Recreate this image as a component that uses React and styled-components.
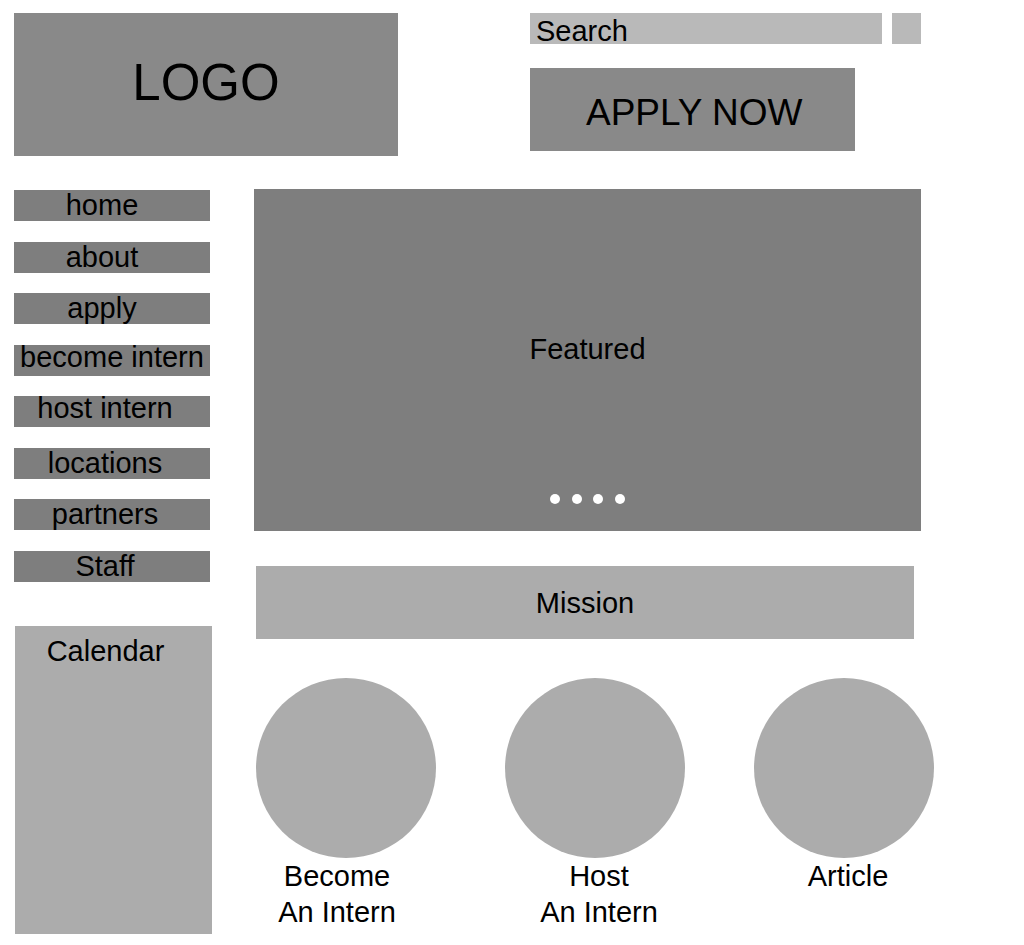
import React from "react";
import styled, { createGlobalStyle } from "styled-components";

const GlobalStyle = createGlobalStyle`
  *, *::before, *::after { box-sizing: border-box; }
  body {
    margin: 0;
    background: #ffffff;
    color: #000000;
    font-family: "Liberation Sans", Arial, Helvetica, sans-serif;
    font-size: 29px;
    line-height: 36px;
  }
  button, input { font: inherit; color: inherit; border: 0; border-radius: 0; margin: 0; padding: 0; }
  button { cursor: pointer; }
  a { color: inherit; text-decoration: none; }
  h1, h2, p { margin: 0; font-size: inherit; font-weight: normal; }
`;

const Page = styled.div`
  padding: 13px 90px 11px 14px;
`;

const Header = styled.header`
  display: grid;
  grid-template-columns: minmax(0, 384fr) minmax(0, 391fr);
  column-gap: 132px;
  margin-right: 13px;
`;

const Logo = styled.h1`
  display: flex;
  align-items: center;
  justify-content: center;
  height: 143px;
  padding-bottom: 3px;
  background: #898989;
  font-size: 51px;
`;

const Tools = styled.div`
  display: flex;
  flex-direction: column;
  gap: 24px;
`;

const SearchForm = styled.form`
  display: flex;
  gap: 10px;
  height: 31px;
`;

const SearchInput = styled.input`
  flex: 1;
  min-width: 0;
  padding: 6px 0 0 6px;
  background: #b9b9b9;
  line-height: 25px;
  outline: none;
  &::placeholder { color: #000000; opacity: 1; }
`;

const SearchButton = styled.button`
  width: 29px;
  background: #b9b9b9;
`;

const ApplyButton = styled.button`
  width: 83%;
  height: 83px;
  padding: 7px 0 0 4px;
  background: #898989;
  font-size: 37px;
`;

const Body = styled.div`
  display: grid;
  grid-template-columns: 198px minmax(0, 1fr);
  column-gap: 42px;
  margin-top: 33px;
`;

const Sidebar = styled.aside`
  display: flex;
  flex-direction: column;
  gap: 44px;
  padding-top: 1px;
`;

const Nav = styled.nav`
  display: flex;
  flex-direction: column;
  justify-content: space-between;
  min-height: 392px;
  margin-right: 2px;
`;

const NavLink = styled.a`
  display: flex;
  justify-content: center;
  height: 31px;
  padding-right: ${({ $inset }) => $inset}px;
  background: #7e7e7e;
  line-height: ${({ $raised }) => ($raised ? 25 : 31)}px;
  white-space: nowrap;
`;

const Calendar = styled.section`
  flex: 1;
  min-height: 308px;
  margin-left: 1px;
  padding: 7px 16px 0 0;
  background: #acacac;
  text-align: center;
`;

const Content = styled.main`
  min-width: 0;
`;

const Featured = styled.section`
  display: flex;
  flex-direction: column;
  align-items: center;
  justify-content: space-between;
  height: 342px;
  margin-right: 13px;
  padding: 142px 0 27px;
  background: #7e7e7e;
`;

const Dots = styled.div`
  display: flex;
  justify-content: space-between;
  width: 75px;
`;

const Dot = styled.button`
  width: 10px;
  height: 10px;
  border-radius: 50%;
  background: #ffffff;
`;

const Mission = styled.section`
  display: flex;
  align-items: center;
  justify-content: center;
  height: 73px;
  margin: 35px 20px 39px 2px;
  background: #acacac;
`;

const Cards = styled.div`
  display: flex;
  justify-content: space-between;
  margin-left: 2px;
`;

const Card = styled.a`
  display: block;
  width: 180px;
  text-align: center;
`;

const Circle = styled.div`
  height: 180px;
  border-radius: 50%;
  background: #acacac;
`;

const Caption = styled.p`
  padding: ${({ $side }) => ($side === "left" ? "0 18px 0 0" : "0 0 0 8px")};
  white-space: pre-line;
`;

const links = [
  { label: "home", inset: 20 },
  { label: "about", inset: 20 },
  { label: "apply", inset: 20 },
  { label: "become intern", inset: 0, raised: true },
  { label: "host intern", inset: 14, raised: true },
  { label: "locations", inset: 14 },
  { label: "partners", inset: 14 },
  { label: "Staff", inset: 14 },
];

const cards = [
  { caption: "Become\nAn Intern", side: "left" },
  { caption: "Host\nAn Intern", side: "right" },
  { caption: "Article", side: "right" },
];

export default function App() {
  return (
    <>
      <GlobalStyle />
      <Page>
        <Header>
          <Logo>LOGO</Logo>
          <Tools>
            <SearchForm role="search" onSubmit={(e) => e.preventDefault()}>
              <SearchInput type="text" aria-label="Search" placeholder="Search" />
              <SearchButton type="submit" aria-label="Submit search" />
            </SearchForm>
            <ApplyButton type="button">APPLY NOW</ApplyButton>
          </Tools>
        </Header>
        <Body>
          <Sidebar>
            <Nav>
              {links.map(({ label, inset, raised }) => (
                <NavLink key={label} href="#" $inset={inset} $raised={raised}>
                  {label}
                </NavLink>
              ))}
            </Nav>
            <Calendar>
              <h2>Calendar</h2>
            </Calendar>
          </Sidebar>
          <Content>
            <Featured>
              <h2>Featured</h2>
              <Dots>
                {[1, 2, 3, 4].map((n) => (
                  <Dot key={n} type="button" aria-label={`Slide ${n}`} />
                ))}
              </Dots>
            </Featured>
            <Mission>
              <h2>Mission</h2>
            </Mission>
            <Cards>
              {cards.map(({ caption, side }) => (
                <Card key={caption} href="#">
                  <Circle />
                  <Caption $side={side}>{caption}</Caption>
                </Card>
              ))}
            </Cards>
          </Content>
        </Body>
      </Page>
    </>
  );
}
